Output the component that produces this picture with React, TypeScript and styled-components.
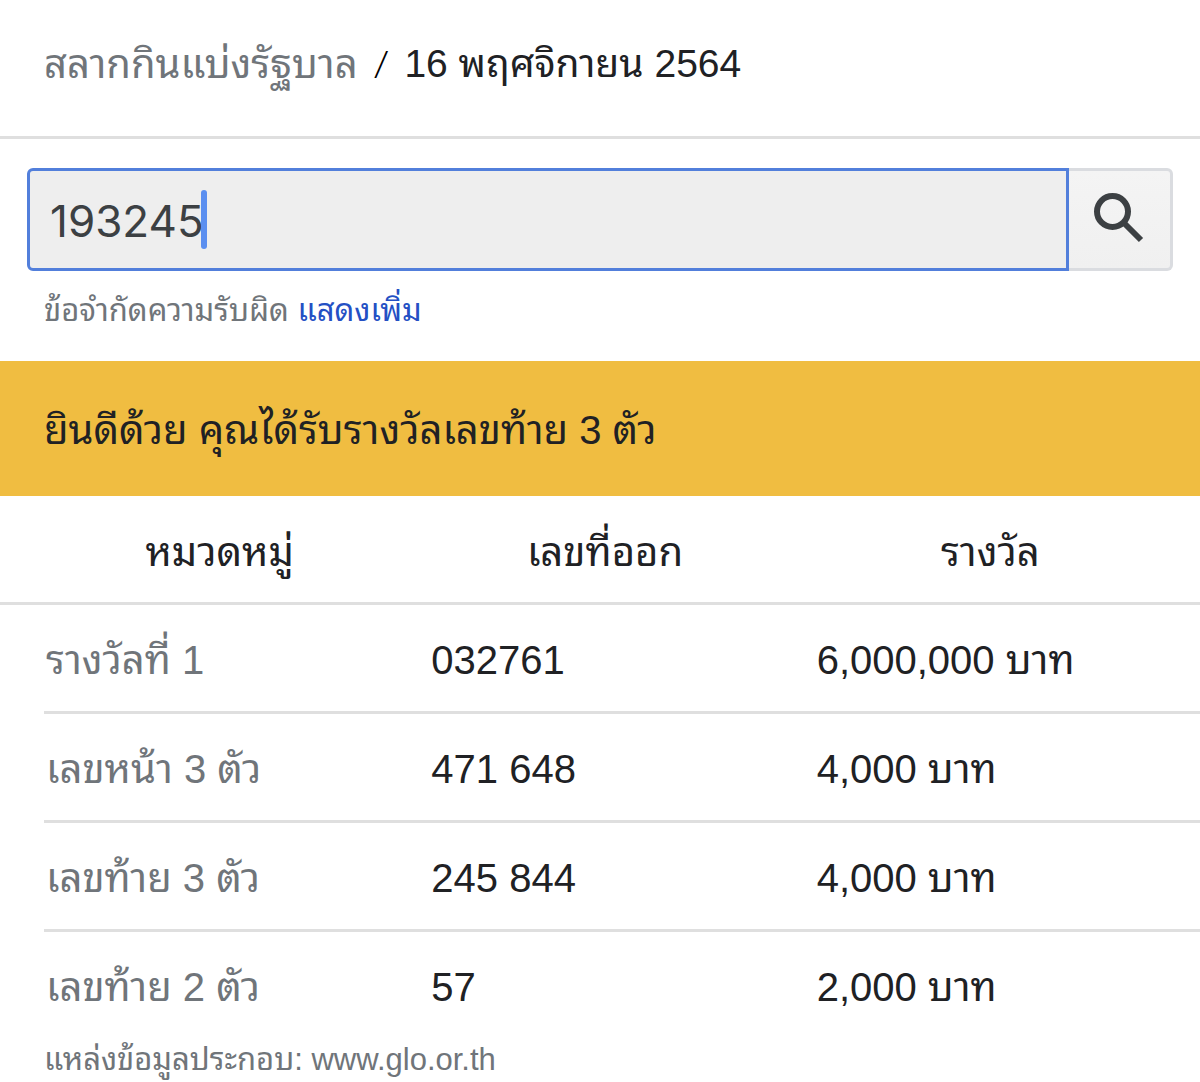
import React, { useState } from 'react';
import styled, { createGlobalStyle } from 'styled-components';

const GlobalStyle = createGlobalStyle`
  *, *::before, *::after { box-sizing: border-box; }
  body {
    margin: 0;
    background: #ffffff;
    color: #202124;
    font-family: "Liberation Sans", Thonburi, "Noto Sans Thai Looped", "Noto Looped Thai", Loma, Garuda, Waree, "Noto Sans", sans-serif;
    font-size: 40px;
    line-height: 48px;
  }
`;

const Header = styled.header`
  display: flex;
  align-items: center;
  gap: 18px;
  padding: 40px 44px 48px;
  border-bottom: 3px solid #dfdfdf;
`;

const Crumb = styled.a`
  color: #70757a;
  text-decoration: none;
`;

const Slash = styled.span`
  color: #000000;
  font-family: Inter, sans-serif;
  font-size: 31px;
  font-style: italic;
  font-weight: 300;
`;

const DrawDate = styled.h1`
  margin: 0;
  font-size: 39px;
  font-weight: 400;
`;

const SearchForm = styled.form`
  display: flex;
  height: 103px;
  margin: 29px 27px 0;
`;

const Field = styled.div`
  position: relative;
  display: flex;
  flex: 1;
  min-width: 0;
`;

const NumberInput = styled.input`
  flex: 1;
  min-width: 0;
  padding: 2px 20px 0;
  border: 3px solid #527fdb;
  border-radius: 6px 0 0 6px;
  outline: none;
  background: #eeeeee;
  color: #3c4043;
  caret-color: transparent;
  font-family: Inter, sans-serif;
  font-size: 44px;
`;

const Caret = styled.span`
  position: absolute;
  top: 22px;
  left: 174px;
  width: 6px;
  height: 59px;
  border-radius: 3px;
  background: #5b8ff0;
  pointer-events: none;
`;

const SearchButton = styled.button`
  display: grid;
  place-items: center;
  width: 104px;
  padding: 0 2px 4px 0;
  border: 3px solid #dadce0;
  border-left: 0;
  border-radius: 0 6px 6px 0;
  background: linear-gradient(#f4f4f4, #f0f0f0);
  color: #3c4043;
`;

const Disclaimer = styled.p`
  margin: 0;
  padding: 20px 44px 30px;
  color: #70757a;
  font-size: 31px;
  line-height: 40px;
`;

const MoreLink = styled.a`
  color: #2450c4;
  text-decoration: none;
`;

const Banner = styled.section`
  padding: 45px 44px 42px;
  background: #f0bd41;
`;

const Results = styled.table`
  display: block;
`;

const Head = styled.thead`
  display: block;
  padding-left: 44px;
  border-bottom: 3px solid #dfdfdf;
`;

const Body = styled.tbody`
  display: block;
  padding-left: 44px;
`;

const Row = styled.tr`
  display: grid;
  grid-template-columns: repeat(3, minmax(0, 1fr));

  & + & {
    border-top: 3px solid #dfdfdf;
  }
`;

const HeadCell = styled.th`
  padding: 32px 34px 26px 0;
  font-weight: 400;
`;

const Category = styled.th`
  padding: 31px 2px 27px;
  color: #70757a;
  font-weight: 400;
  text-align: left;
`;

const Cell = styled.td`
  padding: 31px 2px 27px;
`;

const Source = styled.footer`
  padding: 2px 44px 0;
  color: #70757a;
  font-size: 31px;
  line-height: 40px;
`;

const prizes = [
  { category: 'รางวัลที่ 1', numbers: '032761', amount: '6,000,000 บาท' },
  { category: 'เลขหน้า 3 ตัว', numbers: '471 648', amount: '4,000 บาท' },
  { category: 'เลขท้าย 3 ตัว', numbers: '245 844', amount: '4,000 บาท' },
  { category: 'เลขท้าย 2 ตัว', numbers: '57', amount: '2,000 บาท' },
];

function SearchIcon() {
  return (
    <svg width="50" height="50" viewBox="0 0 50 50" fill="none" stroke="currentColor" strokeWidth="6" aria-hidden="true">
      <circle cx="18.500" cy="18.500" r="15.500" />
      <path d="M31 31 47 47" />
    </svg>
  );
}

export default function App() {
  const [value, setValue] = useState('193245');
  return (
    <main>
      <GlobalStyle />
      <Header>
        <Crumb href="#">สลากกินแบ่งรัฐบาล</Crumb>
        <Slash>/</Slash>
        <DrawDate>16 พฤศจิกายน 2564</DrawDate>
      </Header>
      <SearchForm onSubmit={(e) => e.preventDefault()}>
        <Field>
          <NumberInput aria-label="เลขสลาก" inputMode="numeric" value={value} onChange={(e) => setValue(e.target.value)} />
          <Caret />
        </Field>
        <SearchButton aria-label="ค้นหา"><SearchIcon /></SearchButton>
      </SearchForm>
      <Disclaimer>ข้อจำกัดความรับผิด <MoreLink href="#">แสดงเพิ่ม</MoreLink></Disclaimer>
      <Banner>ยินดีด้วย คุณได้รับรางวัลเลขท้าย 3 ตัว</Banner>
      <Results>
        <Head>
          <Row>
            <HeadCell scope="col">หมวดหมู่</HeadCell>
            <HeadCell scope="col">เลขที่ออก</HeadCell>
            <HeadCell scope="col">รางวัล</HeadCell>
          </Row>
        </Head>
        <Body>
          {prizes.map((prize) => (
            <Row key={prize.category}>
              <Category scope="row">{prize.category}</Category>
              <Cell>{prize.numbers}</Cell>
              <Cell>{prize.amount}</Cell>
            </Row>
          ))}
        </Body>
      </Results>
      <Source>แหล่งข้อมูลประกอบ: www.glo.or.th</Source>
    </main>
  );
}
